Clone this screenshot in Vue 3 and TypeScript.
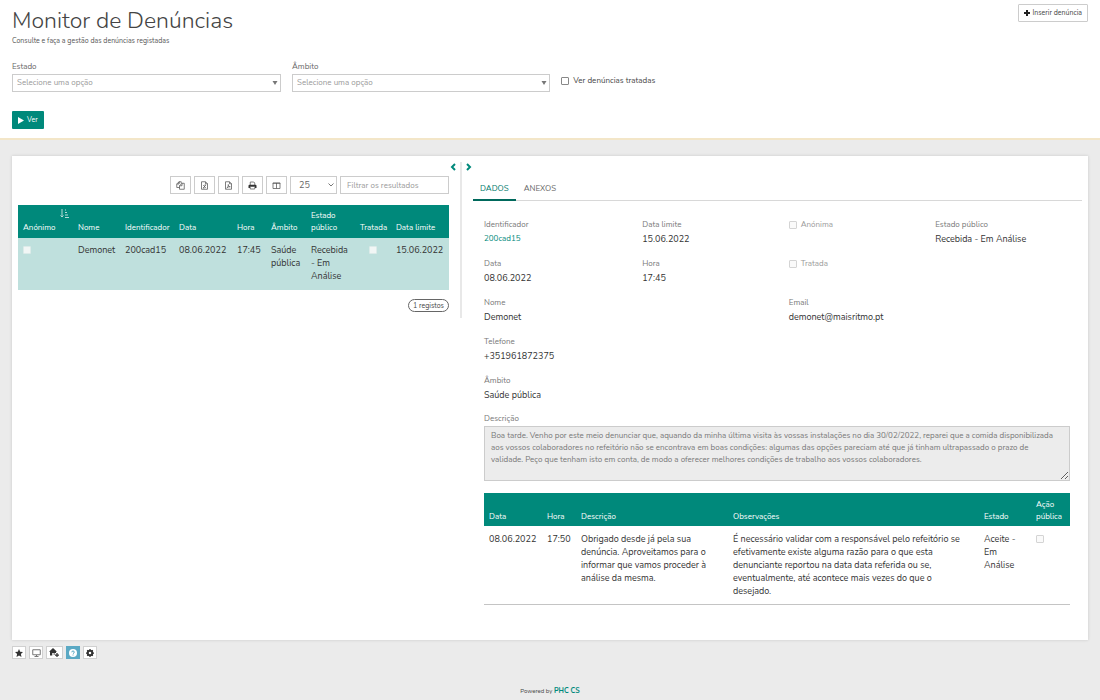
<script setup lang="ts">
import { ref } from 'vue'

interface Column { label: string; share: number; check?: boolean; sorted?: boolean }

const estado = ref('')
const ambito = ref('')
const tratadas = ref(false)
const pageSize = ref('25')
const filtro = ref('')
const descricao = ref(
  'Boa tarde. Venho por este meio denunciar que, aquando da minha última visita às vossas instalações no dia 30/02/2022, reparei que a comida disponibilizada aos vossos colaboradores no refeitório não se encontrava em boas condições: algumas das opções pareciam até que já tinham ultrapassado o prazo de validade. Peço que tenham isto em conta, de modo a oferecer melhores condições de trabalho aos vossos colaboradores.'
)

const listColumns: Column[] = [
  { label: 'Anónimo', share: 55, check: true, sorted: true },
  { label: 'Nome', share: 47 },
  { label: 'Identificador', share: 54 },
  { label: 'Data', share: 58 },
  { label: 'Hora', share: 34 },
  { label: 'Âmbito', share: 40 },
  { label: 'Estado público', share: 49 },
  { label: 'Tratada', share: 36, check: true },
  { label: 'Data limite', share: 58 }
]
const listRow = ['', 'Demonet', '200cad15', '08.06.2022', '17:45', 'Saúde pública', 'Recebida - Em Análise', '', '15.06.2022']

const logColumns: Column[] = [
  { label: 'Data', share: 58 },
  { label: 'Hora', share: 34 },
  { label: 'Descrição', share: 152 },
  { label: 'Observações', share: 251 },
  { label: 'Estado', share: 52 },
  { label: 'Ação pública', share: 39, check: true }
]
const logRow = [
  '08.06.2022',
  '17:50',
  'Obrigado desde já pela sua denúncia. Aproveitamos para o informar que vamos proceder à análise da mesma.',
  'É necessário validar com a responsável pelo refeitório se efetivamente existe alguma razão para o que esta denunciante reportou na data data referida ou se, eventualmente, até acontece mais vezes do que o desejado.',
  'Aceite - Em Análise',
  ''
]

function width(cols: Column[], col: Column): string {
  const total = cols.reduce((sum, c) => sum + c.share, 0)
  return `${(col.share / total) * 100}%`
}
</script>

<template>
  <div class="page">
    <header class="top">
      <div class="heading">
        <div>
          <h1>Monitor de Denúncias</h1>
          <p class="subtitle">Consulte e faça a gestão das denúncias registadas</p>
        </div>
        <button type="button" class="insert">
          <svg width="6" height="6" viewBox="0 0 6 6"><path d="M3 0v6M0 3h6" stroke="#222" stroke-width="2" /></svg>
          Inserir denúncia
        </button>
      </div>
      <div class="filters">
        <div class="filter">
          <label for="estado">Estado</label>
          <div class="select-wrap">
            <select id="estado" v-model="estado"><option value="">Selecione uma opção</option></select>
            <svg class="caret" width="6" height="4" viewBox="0 0 6 4"><path d="M.5 0h5L3 4z" fill="#777" /></svg>
          </div>
        </div>
        <div class="filter">
          <label for="ambito">Âmbito</label>
          <div class="select-wrap">
            <select id="ambito" v-model="ambito"><option value="">Selecione uma opção</option></select>
            <svg class="caret" width="6" height="4" viewBox="0 0 6 4"><path d="M.5 0h5L3 4z" fill="#777" /></svg>
          </div>
        </div>
        <label class="check dark"><input v-model="tratadas" type="checkbox" />Ver denúncias tratadas</label>
      </div>
      <button type="button" class="run">
        <svg width="6" height="7" viewBox="0 0 6 7"><path d="M0 0l6 3.5L0 7z" fill="#fff" /></svg>
        Ver
      </button>
    </header>

    <main class="card">
      <section class="list">
        <div class="toolbar">
          <button type="button" class="tool" aria-label="Copiar">
            <svg width="9" height="9" viewBox="0 0 18 18"><path d="M6 5V1.500h4.500V5M6 1.500L1.500 6v7H7M6 1.500V6H1.500M12 4.500h4.500V16.500H7V9.500zM12 4.500v5H7" /></svg>
          </button>
          <button type="button" class="tool" aria-label="Exportar Excel">
            <svg width="9" height="9" viewBox="0 0 18 18"><path d="M3 1.500h8l4 4v11H3zM11 1.500v4h4M6.500 8l5 6M11.500 8l-5 6M6 14h3M9 8h3" /></svg>
          </button>
          <button type="button" class="tool" aria-label="Exportar PDF">
            <svg width="9" height="9" viewBox="0 0 18 18"><path d="M3 1.500h8l4 4v11H3zM11 1.500v4h4M5.500 14c2-1 3.500-4 3-7 0 3 2 5 4 4.500-2-.5-5 .5-7 2.500z" /></svg>
          </button>
          <button type="button" class="tool" aria-label="Imprimir">
            <svg width="9" height="9" viewBox="0 0 18 18"><path d="M4.500 8V2h7l2 2v4" /><path class="solid" d="M1 14V9.500Q1 7.500 3 7.500h12q2 0 2 2V14h-3v-2.500H4V14z" /><path d="M4.500 12v4h9v-4" /></svg>
          </button>
          <button type="button" class="tool" aria-label="Colunas">
            <svg width="9" height="9" viewBox="0 0 18 18"><path d="M2 4h14v11H2zM9 4v11" /><path d="M1.500 4.500h15" stroke-width="3" /></svg>
          </button>
          <div class="select-wrap size">
            <select v-model="pageSize" aria-label="Registos por página"><option>25</option></select>
            <svg class="caret" width="6" height="4" viewBox="0 0 6 4"><path d="M.5.5L3 3 5.500.5" fill="none" stroke="#777" /></svg>
          </div>
          <input v-model="filtro" class="search" type="text" placeholder="Filtrar os resultados" aria-label="Filtrar os resultados" />
        </div>
        <table class="grid selected">
          <colgroup><col v-for="c in listColumns" :key="c.label" :style="{ width: width(listColumns, c) }" /></colgroup>
          <thead>
            <tr>
              <th v-for="c in listColumns" :key="c.label" scope="col">
                <svg v-if="c.sorted" class="sort" width="9" height="9" viewBox="0 0 9 9"><path d="M2 0v8M.500 6.500L2 8l1.500-1.500M5 1h1M5 3.500h2M5 6h3M5 8.500h4" fill="none" stroke="#b5dcd8" /></svg>
                {{ c.label }}
              </th>
            </tr>
          </thead>
          <tbody>
            <tr>
              <td v-for="(c, i) in listColumns" :key="c.label" :class="{ mid: c.check && i > 0 }">
                <input v-if="c.check" type="checkbox" disabled :aria-label="c.label" />
                <template v-else>{{ listRow[i] }}</template>
              </td>
            </tr>
          </tbody>
        </table>
        <div class="count"><span>1 registos</span></div>
      </section>

      <div class="splitter">
        <button type="button" aria-label="Recolher lista">
          <svg width="6" height="8" viewBox="0 0 6 8"><path d="M5 1L2 4l3 3" /></svg>
        </button>
        <button type="button" aria-label="Expandir lista">
          <svg width="6" height="8" viewBox="0 0 6 8"><path d="M1 1l3 3-3 3" /></svg>
        </button>
      </div>

      <section class="detail">
        <nav class="tabs" role="tablist">
          <button type="button" role="tab" class="active" aria-selected="true">DADOS</button>
          <button type="button" role="tab" aria-selected="false">ANEXOS</button>
        </nav>
        <div class="body">
          <div class="fields">
            <div class="field"><span>Identificador</span><a href="#">200cad15</a></div>
            <div class="field"><span>Data limite</span><b>15.06.2022</b></div>
            <label class="check"><input type="checkbox" disabled />Anónima</label>
            <div class="field"><span>Estado público</span><b>Recebida - Em Análise</b></div>
            <div class="field"><span>Data</span><b>08.06.2022</b></div>
            <div class="field"><span>Hora</span><b>17:45</b></div>
            <label class="check wide"><input type="checkbox" disabled />Tratada</label>
            <div class="field wide"><span>Nome</span><b>Demonet</b></div>
            <div class="field wide"><span>Email</span><b>demonet@maisritmo.pt</b></div>
            <div class="field full"><span>Telefone</span><b>+351961872375</b></div>
            <div class="field full"><span>Âmbito</span><b>Saúde pública</b></div>
          </div>
          <label class="area-label" for="descricao">Descrição</label>
          <textarea id="descricao" v-model="descricao" readonly></textarea>
          <table class="grid log">
            <colgroup><col v-for="c in logColumns" :key="c.label" :style="{ width: width(logColumns, c) }" /></colgroup>
            <thead>
              <tr><th v-for="c in logColumns" :key="c.label" scope="col">{{ c.label }}</th></tr>
            </thead>
            <tbody>
              <tr>
                <td v-for="(c, i) in logColumns" :key="c.label">
                  <input v-if="c.check" type="checkbox" disabled :aria-label="c.label" />
                  <template v-else>{{ logRow[i] }}</template>
                </td>
              </tr>
            </tbody>
          </table>
        </div>
      </section>
    </main>

    <div class="shortcuts">
      <button type="button" aria-label="Favoritos">
        <svg width="8" height="8" viewBox="0 0 16 16"><path d="M8 0l2.400 5.500 5.600.5-4.200 4 1.200 6L8 12.800 3 16l1.200-6L0 6l5.600-.5z" fill="#333" /></svg>
      </button>
      <button type="button" aria-label="Ecrã">
        <svg width="9" height="8" viewBox="0 0 18 16"><path d="M1.500 1.500h15v10h-15zM5 15h8M9 12v3" fill="none" stroke="#777" stroke-width="2" /></svg>
      </button>
      <button type="button" class="home" aria-label="Definir como página inicial">
        <svg width="11" height="9" viewBox="0 0 22 18"><path d="M8 0l8 7.500h-2V10h-3v4H9.500v-4h-3v5H2V7.500H0z" fill="#333" /><path d="M16 10v8M12 14h8" stroke="#333" stroke-width="2.500" /></svg>
      </button>
      <button type="button" class="help" aria-label="Ajuda">
        <svg width="8" height="8" viewBox="0 0 16 16"><circle cx="8" cy="8" r="8" fill="#fff" /><path d="M5.500 6.500Q5.500 4 8 4t2.500 2.200Q10.500 8 8 9.500M8 11v2" fill="none" stroke="#5ba9c4" stroke-width="2" /></svg>
      </button>
      <button type="button" aria-label="Definições">
        <svg width="8" height="8" viewBox="0 0 16 16"><circle cx="8" cy="8" r="4.500" fill="none" stroke="#333" stroke-width="4" /><path d="M8 0v3M8 13v3M0 8h3M13 8h3M2.400 2.400l2 2M11.600 11.600l2 2M13.600 2.400l-2 2M4.400 11.600l-2 2" stroke="#333" stroke-width="2.500" /></svg>
      </button>
    </div>
    <footer>Powered by <a href="#">PHC CS</a></footer>
  </div>
</template>

<style>
html, body { background: #ebebeb; }
</style>

<style scoped>
.page {
  font: 8px/12px Nunito, Lato, "Open Sans", sans-serif;
  color: #444;
}
*, *::before, *::after { box-sizing: border-box; }
button, input, select, textarea { font: inherit; color: inherit; margin: 0; padding: 0; }
button { cursor: pointer; }
svg { display: block; flex: none; }
a { color: #00897b; text-decoration: none; }

.top { background: #fff; border-bottom: 2px solid #f3e6c8; padding: 4px 12px 9px; }
.heading { display: flex; justify-content: space-between; align-items: flex-start; }
h1 { margin: 4px 0 0; font-weight: 300; font-size: 23px; line-height: 26px; color: #444; }
.subtitle { margin: 1px 0 0; font-size: 7px; color: #555; }
.insert {
  display: flex; align-items: center; gap: 2px; height: 18px; padding: 0 5px;
  border: 1px solid #ccc; border-radius: 1px; background: #fff; font-size: 7px;
}
.filters { display: flex; gap: 11px; margin-top: 14px; }
.filter { width: 25%; color: #666; }
.filter + .filter { width: 24%; }
.filter label { display: block; margin-bottom: 1px; }
.select-wrap { position: relative; }
select {
  display: block; width: 100%; height: 18px; padding: 0 4px; appearance: none;
  border: 1px solid #ccc; border-radius: 0; background: #fff; color: #999;
}
.caret { position: absolute; right: 3px; top: 7px; pointer-events: none; }
.check { display: flex; align-items: center; align-self: flex-start; gap: 4px; height: 12px; color: #999; }
.check.dark { color: #444; margin-top: 14px; }
input[type="checkbox"] {
  appearance: none; width: 8px; height: 8px; flex: none;
  border: 1px solid #888; border-radius: 1px; background: #fff;
}
input[type="checkbox"]:checked { background: #00897b; }
input[type="checkbox"]:disabled { border-color: #d4d4d4; background: #fafafa; }
.run {
  display: flex; align-items: center; gap: 3px; height: 18px; margin-top: 19px; padding: 0 6px;
  border: 0; border-radius: 1px; background: #00897b; color: #fff; font-size: 7px;
}

.card {
  display: grid; grid-template-columns: 431fr 24px 609fr; align-items: start;
  min-height: 484px; margin: 16px 12px 0; padding: 6px;
  background: #fff; box-shadow: 0 0 3px rgba(0, 0, 0, 0.15);
}
.toolbar { display: flex; justify-content: flex-end; gap: 3px; margin: 14px 0 11px; }
.tool {
  display: grid; place-items: center; width: 21px; height: 18px;
  border: 1px solid #ccc; background: #fff;
}
.tool path { fill: none; stroke: #555; stroke-width: 1.5; }
.tool .solid { fill: #333; stroke: none; }
.size { width: 47px; }
.size select { padding: 0 8px; font-size: 9px; color: #666; }
.search { width: 109px; height: 18px; padding: 0 6px; border: 1px solid #ccc; background: #fff; }
.search::placeholder { color: #999; opacity: 1; }

.grid { width: 100%; table-layout: fixed; border-collapse: collapse; }
.grid th {
  height: 33px; padding: 4px 5px; background: #00897b; color: #fff;
  font-weight: 400; text-align: left; vertical-align: bottom;
}
.grid td { padding: 6px 5px 7px; font-size: 9px; line-height: 13px; vertical-align: top; color: #333; }
.selected td { background: #bfe0dd; }
.sort { margin: 0 0 4px 37px; }
.grid td input { display: block; margin-top: 2px; }
.selected td input[type="checkbox"] { border-color: #dcebe9; background: #f1f6f5; }
.grid td.mid input { margin-left: 9px; }
.log th { padding-bottom: 3px; }
.log td { padding: 7px 10px 6px 5px; }
.log tbody tr { border-bottom: 1px solid #c4c4c4; }
.count { display: flex; justify-content: flex-end; margin-top: 9px; }
.count span { padding: 0 4px; border: 1px solid #666; border-radius: 7px; font-size: 7px; line-height: 11px; }

.splitter {
  display: flex; justify-content: space-between; align-items: flex-start; height: 156px; padding: 0 1px;
  background: linear-gradient(#e8e8e8, #e8e8e8) center / 2px 100% no-repeat;
}
.splitter button { margin-top: 1px; border: 0; background: none; }
.splitter path { fill: none; stroke: #00897b; stroke-width: 2; }

.tabs { display: flex; gap: 1px; margin-top: 18px; border-bottom: 1px solid #d8d8d8; }
.tabs button {
  height: 21px; margin-bottom: -1px; padding: 0 7px 2px; border: 0;
  border-bottom: 2px solid transparent; background: none; color: #666;
}
.tabs .active { border-color: #00695c; color: #00796b; }
.body { padding: 18px 12px 0 11px; }
.fields { display: grid; grid-template-columns: 27fr 25fr 25fr 23fr; grid-auto-rows: 27px; row-gap: 12px; }
.field { display: flex; flex-direction: column; gap: 2px; color: #777; }
.field b { font-size: 9px; line-height: 13px; font-weight: 400; color: #333; }
.wide { grid-column: span 2; }
.full { grid-column: 1 / -1; }
.area-label { display: block; margin-top: 11px; color: #777; }
textarea {
  display: block; width: 100%; height: 55px; margin: 1px 0 12px; padding: 3px 12px 3px 6px;
  border: 1px solid #ccc; border-radius: 0; background: #ececec; color: #777; resize: vertical;
}

.shortcuts { display: flex; gap: 3px; margin: 6px 12px 0; }
.shortcuts button {
  display: grid; place-items: center; width: 14px; height: 13px;
  border: 1px solid #d0d0d0; background: #fff;
}
.shortcuts .home { width: 17px; }
.shortcuts .help { border-color: #5ba9c4; background: #5ba9c4; }
footer { margin-top: 26px; text-align: center; font-size: 6px; }
footer a { font-size: 7px; font-weight: 700; }
</style>
